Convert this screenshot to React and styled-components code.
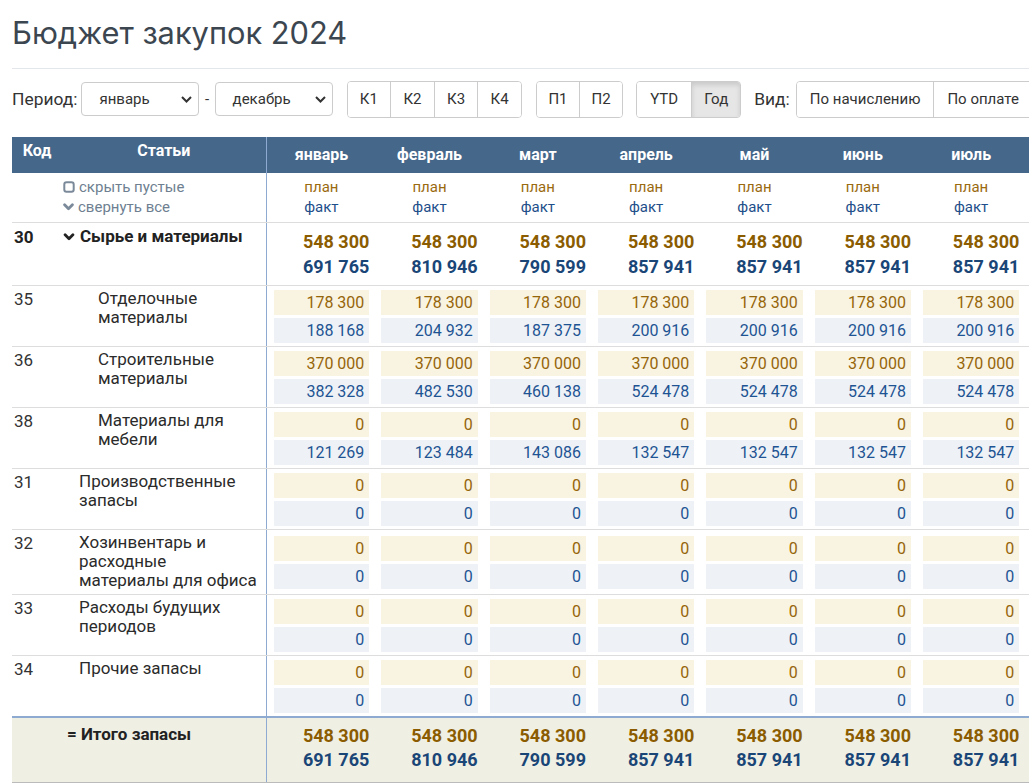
import React from 'react';
import styled, { createGlobalStyle, css } from 'styled-components';

const GlobalStyle = createGlobalStyle`
  html, body { margin: 0; padding: 0; overflow: hidden; background: #fff; }
  body { font-family: Roboto, "Liberation Sans", sans-serif; color: #333; }
  * { box-sizing: border-box; }
`;

const Page = styled.div`
  width: 1029px;
  height: 784px;
  overflow: hidden;
  padding-left: 12px;
`;

const Title = styled.h1`
  margin: 0;
  padding-top: 15px;
  font-family: Inter, "Open Sans", sans-serif;
  font-weight: 400;
  font-size: 30.8px;
  line-height: 36px;
  color: #3b4650;
  white-space: nowrap;
`;

const Rule = styled.div`
  margin-top: 17px;
  height: 1px;
  background: #e3e6ea;
`;

const Toolbar = styled.div`
  margin-top: 12px;
  display: flex;
  align-items: center;
  white-space: nowrap;
  height: 36px;
`;

const Segment = styled.div`
  display: flex;
  align-items: center;
  gap: ${(p) => p.$gap || 0}px;
  margin-left: ${(p) => p.$ml || 0}px;
  flex: none;
`;

const Label = styled.span`
  font-size: 17.4px;
  color: #333;
`;

const Dash = styled.span`
  font-size: 15px;
  color: #333;
  padding: 0 1.5px;
`;

const SelectBox = styled.div`
  width: 118px;
  height: 34px;
  border: 1px solid #ccc;
  border-radius: 4px;
  display: flex;
  align-items: center;
  justify-content: space-between;
  padding: 0 6px 0 17px;
  font-size: 15px;
  color: #333;
  background: #fff;
  flex: none;
`;

const Group = styled.div`
  display: flex;
  border: 1px solid #ccc;
  border-radius: 4px;
  overflow: hidden;
  height: 37px;
  flex: none;
`;

const Btn = styled.div`
  display: flex;
  align-items: center;
  justify-content: center;
  padding: 0 ${(p) => p.$px || 12}px;
  font-size: 15px;
  color: #333;
  background: #fff;
  & + & { border-left: 1px solid #ccc; }
  ${(p) =>
    p.$active &&
    css`
      background: #e6e6e6;
      box-shadow: inset 0 3px 5px rgba(0, 0, 0, 0.125);
    `}
`;

const Table = styled.table`
  margin-top: 20px;
  border-collapse: collapse;
  table-layout: fixed;
  width: ${50 + 204 + 12 * 108.33}px;
`;

const Col = styled.col`
  width: ${(p) => p.$w}px;
`;

const Th = styled.th`
  background: #45678a;
  color: #fff;
  font-size: 16px;
  font-weight: 700;
  height: 36px;
  padding: ${(p) => (p.$top ? '4px 0 0' : '0 5px 0 7px')};
  vertical-align: ${(p) => (p.$top ? 'top' : 'middle')};
  line-height: 20px;
  text-align: center;
  ${(p) => p.$divider && css`border-right: 1px solid #8eaad0;`}
`;

const Td = styled.td`
  border-bottom: 1px solid #dddddd;
  padding: 0;
  vertical-align: top;
`;

const CodeCell = styled(Td)`
  padding: ${(p) => p.$pt || 3}px 0 0 2px;
  font-size: 17px;
  line-height: 20px;
  font-weight: ${(p) => (p.$bold ? 700 : 400)};
  color: ${(p) => (p.$bold ? '#222' : '#333')};
`;

const LabelCell = styled(Td)`
  border-right: 1px solid #8eaad0;
  padding: ${(p) => p.$pt || 3}px 2px 4px ${(p) => p.$indent}px;
  font-size: 17px;
  line-height: 19px;
  font-weight: ${(p) => (p.$bold ? 700 : 400)};
  color: ${(p) => (p.$bold ? '#222' : '#2b2b2b')};
`;

const MonthCell = styled(Td)`
  padding: ${(p) => p.$pad || '4px 5px 3px 7px'};
  vertical-align: ${(p) => p.$valign || 'middle'};
`;

const ValueBox = styled.div`
  height: 25px;
  line-height: 25px;
  text-align: right;
  padding-right: 5px;
  font-size: 16px;
  background: ${(p) => (p.$kind === 'plan' ? '#f9f3e1' : '#eef2f6')};
  color: ${(p) => (p.$kind === 'plan' ? '#95650a' : '#1e5493')};
  & + & { margin-top: 3px; }
`;

const BigValue = styled.div`
  text-align: right;
  font-size: 18px;
  font-weight: 700;
  line-height: ${(p) => p.$lh || 25}px;
  color: ${(p) => (p.$kind === 'plan' ? '#8b5c00' : '#1a4677')};
`;

const Caption = styled.div`
  text-align: center;
  font-size: 15px;
  line-height: 20px;
  color: ${(p) => (p.$kind === 'plan' ? '#9a6a10' : '#1e4f8a')};
`;

const Tool = styled.div`
  display: flex;
  align-items: center;
  gap: 4px;
  font-size: 15px;
  line-height: 20px;
  color: #6e7f91;
  & svg { flex: none; }
`;

const GroupTitle = styled.div`
  display: flex;
  align-items: center;
  gap: 5px;
  & svg { flex: none; }
`;

const TotalCode = styled.td`
  border-top: 2px solid #8eaad0;
  border-bottom: 1px solid #bbbbbb;
  background: #f0efe4;
  padding: 0;
`;

const TotalLabel = styled(TotalCode)`
  border-right: 1px solid #8eaad0;
  vertical-align: top;
  padding: 5px 0 0 5px;
  font-size: 17px;
  font-weight: 700;
  line-height: 22px;
  color: #222;
`;

const TotalMonth = styled(TotalCode)`
  vertical-align: top;
  padding: 6px 5px 10px 7px;
`;

const MONTHS = [
  'январь', 'февраль', 'март', 'апрель', 'май', 'июнь',
  'июль', 'август', 'сентябрь', 'октябрь', 'ноябрь', 'декабрь',
];

const fill = (head, rest) => [...head, ...Array(12 - head.length).fill(rest)];

const GROUP_PLAN = Array(12).fill(548300);
const GROUP_FACT = fill([691765, 810946, 790599], 857941);

const ROWS = [
  { code: '35', label: 'Отделочные материалы', level: 1, plan: Array(12).fill(178300), fact: fill([188168, 204932, 187375], 200916) },
  { code: '36', label: 'Строительные материалы', level: 1, plan: Array(12).fill(370000), fact: fill([382328, 482530, 460138], 524478) },
  { code: '38', label: 'Материалы для мебели', level: 1, plan: Array(12).fill(0), fact: fill([121269, 123484, 143086], 132547) },
  { code: '31', label: 'Производственные запасы', level: 0, plan: Array(12).fill(0), fact: Array(12).fill(0) },
  { code: '32', label: 'Хозинвентарь и расходные материалы\u00a0для\u00a0офиса', level: 0, plan: Array(12).fill(0), fact: Array(12).fill(0) },
  { code: '33', label: 'Расходы будущих периодов', level: 0, plan: Array(12).fill(0), fact: Array(12).fill(0) },
  { code: '34', label: 'Прочие запасы', level: 0, plan: Array(12).fill(0), fact: Array(12).fill(0) },
];

const fmt = (n) => n.toLocaleString('ru-RU').replace(/\s/g, '\u00a0');

const SelectArrow = () => (
  <svg width="11" height="7" viewBox="0 0 11 7" fill="none">
    <path d="M1 1l4.5 4.5L10 1" stroke="#333" strokeWidth="2" />
  </svg>
);

const Chevron = ({ color, w = 11 }) => (
  <svg width={w} height="8" viewBox="0 0 11 8" fill="none">
    <path d="M1.6 1.8l3.9 3.9 3.9-3.9" stroke={color} strokeWidth="2.8" strokeLinecap="round" strokeLinejoin="round" />
  </svg>
);

const CheckBoxIcon = () => (
  <svg width="12" height="12" viewBox="0 0 12 12" fill="none">
    <rect x="1.3" y="1.3" width="9.4" height="9.4" rx="2.2" stroke="#7b8a9a" strokeWidth="2" />
  </svg>
);

const Select = ({ value }) => (
  <SelectBox>
    <span>{value}</span>
    <SelectArrow />
  </SelectBox>
);

export default function App() {
  return (
    <Page>
      <GlobalStyle />
      <Title>Бюджет закупок 2024</Title>
      <Rule />
      <Toolbar>
        <Segment $gap={4}>
          <Label>Период:</Label>
          <Select value="январь" />
          <Dash>-</Dash>
          <Select value="декабрь" />
        </Segment>
        <Segment $ml={14}>
          <Group>
            <Btn $px={12.25}>К1</Btn>
            <Btn $px={12.25}>К2</Btn>
            <Btn $px={12.25}>К3</Btn>
            <Btn $px={12.25}>К4</Btn>
          </Group>
        </Segment>
        <Segment $ml={14}>
          <Group>
            <Btn $px={11.5}>П1</Btn>
            <Btn $px={11.5}>П2</Btn>
          </Group>
        </Segment>
        <Segment $ml={13}>
          <Group>
            <Btn $px={13}>YTD</Btn>
            <Btn $px={12} $active>Год</Btn>
          </Group>
        </Segment>
        <Segment $ml={13} $gap={6}>
          <Label>Вид:</Label>
          <Group>
            <Btn $px={13}>По начислению</Btn>
            <Btn $px={13}>По оплате</Btn>
            <Btn $px={13}>По отгрузке</Btn>
          </Group>
        </Segment>
      </Toolbar>

      <Table>
        <colgroup>
          <Col $w={50} />
          <Col $w={204} />
          {MONTHS.map((m) => (
            <Col key={m} $w={108.33} />
          ))}
        </colgroup>
        <thead>
          <tr>
            <Th $top>Код</Th>
            <Th $top $divider>Статьи</Th>
            {MONTHS.map((m) => (
              <Th key={m}>{m}</Th>
            ))}
          </tr>
        </thead>
        <tbody>
          <tr>
            <Td />
            <LabelCell $indent={1} $pt={4}>
              <Tool>
                <CheckBoxIcon />
                скрыть пустые
              </Tool>
              <Tool>
                <Chevron color="#7b8a9a" />
                свернуть все
              </Tool>
            </LabelCell>
            {MONTHS.map((m) => (
              <MonthCell key={m} $pad="4px 5px 5px 7px" $valign="top">
                <Caption $kind="plan">план</Caption>
                <Caption $kind="fact">факт</Caption>
              </MonthCell>
            ))}
          </tr>

          <tr>
            <CodeCell $bold $pt={4}>30</CodeCell>
            <LabelCell $indent={1} $bold $pt={4}>
              <GroupTitle>
                <Chevron color="#222" w={12} />
                Сырье и материалы
              </GroupTitle>
            </LabelCell>
            {MONTHS.map((m, i) => (
              <MonthCell key={m} $pad="6px 5px 6px 7px" $valign="top">
                <BigValue $kind="plan">{fmt(GROUP_PLAN[i])}</BigValue>
                <BigValue $kind="fact">{fmt(GROUP_FACT[i])}</BigValue>
              </MonthCell>
            ))}
          </tr>

          {ROWS.map((r) => (
            <tr key={r.code}>
              <CodeCell>{r.code}</CodeCell>
              <LabelCell $indent={r.level ? 36 : 17}>{r.label}</LabelCell>
              {MONTHS.map((m, i) => (
                <MonthCell key={m}>
                  <ValueBox $kind="plan">{fmt(r.plan[i])}</ValueBox>
                  <ValueBox $kind="fact">{fmt(r.fact[i])}</ValueBox>
                </MonthCell>
              ))}
            </tr>
          ))}

          <tr>
            <TotalCode />
            <TotalLabel>= Итого запасы</TotalLabel>
            {MONTHS.map((m, i) => (
              <TotalMonth key={m}>
                <BigValue $kind="plan" $lh={24}>{fmt(GROUP_PLAN[i])}</BigValue>
                <BigValue $kind="fact" $lh={24}>{fmt(GROUP_FACT[i])}</BigValue>
              </TotalMonth>
            ))}
          </tr>
        </tbody>
      </Table>
    </Page>
  );
}
